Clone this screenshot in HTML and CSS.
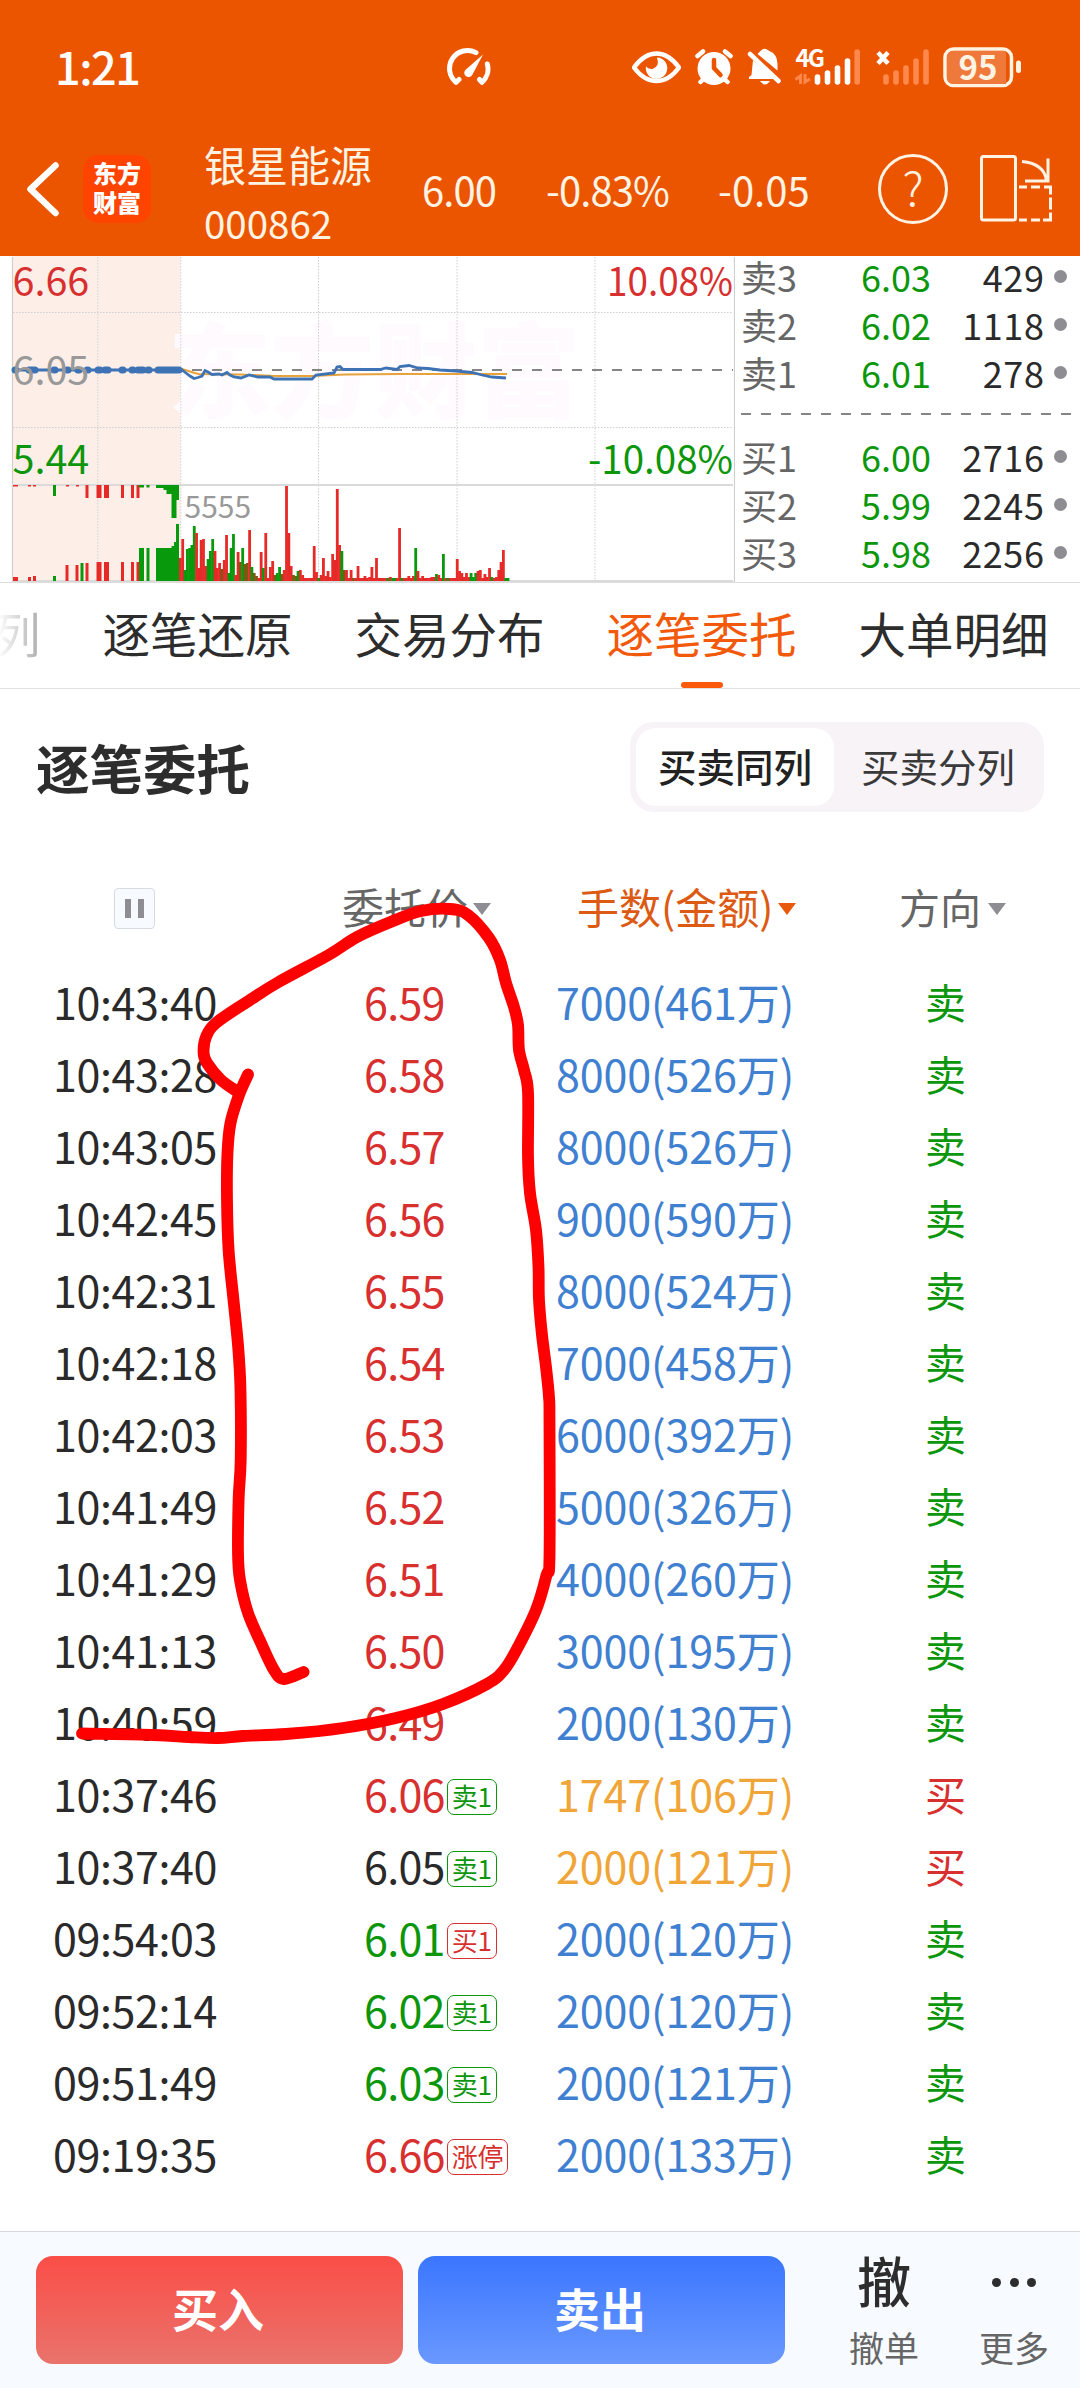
FILE: index.html
```html
<!DOCTYPE html>
<html lang="zh-CN">
<head>
<meta charset="utf-8">
<title>银星能源 000862</title>
<link rel="stylesheet" href="styles.css">
</head>
<body>
<header class="header">
  <div class="status">
    <span class="clock">1:21</span>
    <svg class="gauge" width="46" height="40" viewBox="446 47 46 40" fill="none" stroke="#fff" stroke-width="5" stroke-linecap="round" stroke-linejoin="round">
      <path d="M476 52.6A18 18 0 0 0 456 82.3L459 79.5M487.300 64A18 18 0 0 1 482 82.300L479.500 79.500" />
      <path d="M483 54.500L472.500 74.500A4.300 4.300 0 1 1 466.200 69.200Z" fill="#fff" stroke="none"/>
    </svg>
    <div class="status-icons">
      <svg width="49" height="40" viewBox="632 47 49 40"><path d="M634 67.500C641 58 648 53.500 656.500 53.500S672 58 679 67.500C672 77 665 81 656.500 81S641 77 634 67.500Z" fill="none" stroke="#fff" stroke-width="4.500"/><path d="M657 57.500A10.700 10.700 0 1 1 646 66.500Q649 69.500 652.500 69Q660 66.500 657 57.500Z" fill="#fff"/></svg>
      <svg width="38" height="40" viewBox="695.500 47 38 40" stroke-linecap="round"><circle cx="714.500" cy="68.500" r="16.500" fill="#fff"/><path d="M698 56L703.500 51.500M731 56L725.500 51.500M701 82L705 78M728 82L724 78" stroke="#fff" stroke-width="4.500"/><path d="M714.500 60V68L721 75" fill="none" stroke="#ec5500" stroke-width="4.500"/></svg>
      <svg width="34" height="40" viewBox="747.500 47 34 40"><path d="M753.500 60L775 79H749.500V77L752 75ZM758 54Q761 51 762 50Q765.500 47.500 769 50.500Q778 54 778 64V70.500ZM760.500 81H770.500Q765.500 88 760.500 81Z" fill="#fff"/><path d="M750.500 54L779 81" stroke="#fff" stroke-width="4.500" stroke-linecap="round"/></svg>
      <svg class="loose" width="66" height="40" viewBox="795.500 47 66 40" stroke-width="5.600" stroke-linecap="round"><text class="net" x="796" y="66.500">4G</text><path d="M801 84V76L796 79.500M805.500 74V82L810.500 79" fill="none" stroke="#ff884c" stroke-width="3" stroke-linecap="butt"/><path d="M818 77V82M828 73V82M838 68V82M848 61V82" stroke="#fff"/><path d="M857.700 52V82" stroke="#ff884c"/></svg>
      <svg width="54" height="40" viewBox="875 47 54 40" stroke-width="5.600" stroke-linecap="round"><path d="M878 52.500L888 63.500M888 52.500L878 63.500" stroke="#fff" stroke-width="4.500" stroke-linecap="butt"/><path d="M886 77V82M896 73V82M906 68V82M916 61V82M926 52V82" stroke="#ff884c"/></svg>
      <svg class="loose" width="79" height="40" viewBox="943 47 79 40"><rect x="945" y="49" width="66.500" height="36.500" rx="8.500" fill="#ec5500" stroke="#fff3e3" stroke-width="3.500"/><path d="M953 51H1006V84H953Q947 84 947 77V58Q947 51 953 51Z" fill="#ef783b"/><rect x="1016" y="60.500" width="5" height="12.500" rx="2.500" fill="#fff3e3"/><text class="batt" x="978" y="79.500" text-anchor="middle">95</text></svg>
    </div>
  </div>
  <nav class="nav">
    <svg width="83" height="70" viewBox="0 153.500 83 70" fill="none" stroke="#fff" stroke-width="6.500" stroke-linecap="round" stroke-linejoin="round"><path d="M55.500 165L30.500 188.700L55.500 212.500"/></svg>
    <div class="logo">东方<br>财富</div>
    <div class="stock"><span class="stock-name">银星能源</span><span class="stock-code">000862</span></div>
    <span class="quote tight">6.00</span>
    <span class="quote tight">-0.83%</span>
    <span class="quote">-0.05</span>
    <div class="help">?</div>
    <svg width="76" height="70" viewBox="981 153.500 76 70" fill="none" stroke="#fff3e3" stroke-width="3"><rect x="983.500" y="156" width="34" height="63.500" rx="2"/><path d="M1024 161Q1046 163 1048.500 180M1050 158V180.500H1027"/><path d="M1021 186.500H1029M1033 186.500H1042M1046 186.500H1052.500V194M1052.500 197V209M1052.500 212V219.500H1045M1042 219.500H1033M1029 219.500H1021"/></svg>
  </nav>
</header>

<section class="market">
  <svg class="chart" width="735" height="326" viewBox="0 256 735 326">
    <rect x="13" y="256" width="167.500" height="325" fill="#feeee8"/>
    <text class="watermark" x="168" y="410">东方财富</text>
    <g stroke="#cfcfd3" stroke-width="1" stroke-dasharray="1.500 1.500"><path d="M97.800 257V581M180.800 257V581M318.500 257V581M457 257V581M595 257V581M13 312.500H733M13 427.500H733"/></g>
    <path d="M12.500 257V582M734.500 257V582" stroke="#cfcfcf" stroke-width="1.200"/>
    <path d="M12 485H733M12 581H733" stroke="#dadada" stroke-width="2"/>
    <path d="M192 370H733" stroke="#858585" stroke-width="2" stroke-dasharray="10 10"/>
    <g id="bars"></g>
    <path d="M182 369C190 371 194 373.500 199 374L240 374.500L275 376L312 376L345 374.500L400 374L507 374" fill="none" stroke="#e8a23a" stroke-width="2"/>
    <g stroke="#3d73b4" fill="none"><path stroke-width="2.800" d="M13 370H182L186 373L190 376L194 378.500L198 377.500L202 376L205 370.500L208 372L212 374.500L219 374L222 375L227 372.500L230 375L234 377L241 378L249 375L258 377L270 377L274 379L312 379L316 375L334 373L337 367L340 366.500L343 369.500L380 369.500L386 368L397 369.500L400 366.500L409 365.500L418 368L428 368.500L440 370L456 371L472 372.500L482 375L492 377L506 378"/><path stroke-width="7" stroke-linecap="round" d="M15 370h1M29 370h6M54 370h1M67 370h1M78 370h1M87 370h1M98 370h2M105 370h3M122 370h1M132 370h1M138 370h5M148 370h1M158 370h21"/></g>
    <text class="label up" x="12.500" y="296">6.66</text>
    <text class="label mid" x="12.500" y="385">6.05</text>
    <text class="label down" x="12.500" y="474">5.44</text>
    <text class="label up" x="607" y="295.500" textLength="126" lengthAdjust="spacingAndGlyphs">10.08%</text>
    <text class="label down" x="588" y="474" textLength="145" lengthAdjust="spacingAndGlyphs">-10.08%</text>
    <text class="volume" x="184.500" y="517.500">5555</text>
  </svg>
  <div class="book">
    <div class="level"><span>卖3</span><b>6.03</b><em>429</em><i></i></div>
    <div class="level"><span>卖2</span><b>6.02</b><em>1118</em><i></i></div>
    <div class="level"><span>卖1</span><b>6.01</b><em>278</em><i></i></div>
    <div class="split"></div>
    <div class="level"><span>买1</span><b>6.00</b><em>2716</em><i></i></div>
    <div class="level"><span>买2</span><b>5.99</b><em>2245</em><i></i></div>
    <div class="level"><span>买3</span><b>5.98</b><em>2256</em><i></i></div>
  </div>
</section>

<nav class="tabs">
  <span class="tab faded">列</span>
  <span class="tab">逐笔还原</span>
  <span class="tab">交易分布</span>
  <span class="tab active">逐笔委托</span>
  <span class="tab">大单明细</span>
</nav>

<main class="orders">
  <div class="title-row">
    <h1>逐笔委托</h1>
    <div class="segmented"><span class="seg on">买卖同列</span><span class="seg">买卖分列</span></div>
  </div>
  <div class="row head">
    <span class="pause"><i></i><i></i></span>
    <span class="sort">委托价</span>
    <span class="sort hot">手数(金额)</span>
    <span class="sort">方向</span>
  </div>
  <div class="row"><span>10:43:40</span><span class="up">6.59</span><span class="big">7000(461万)</span><span class="down">卖</span></div>
  <div class="row"><span>10:43:28</span><span class="up">6.58</span><span class="big">8000(526万)</span><span class="down">卖</span></div>
  <div class="row"><span>10:43:05</span><span class="up">6.57</span><span class="big">8000(526万)</span><span class="down">卖</span></div>
  <div class="row"><span>10:42:45</span><span class="up">6.56</span><span class="big">9000(590万)</span><span class="down">卖</span></div>
  <div class="row"><span>10:42:31</span><span class="up">6.55</span><span class="big">8000(524万)</span><span class="down">卖</span></div>
  <div class="row"><span>10:42:18</span><span class="up">6.54</span><span class="big">7000(458万)</span><span class="down">卖</span></div>
  <div class="row"><span>10:42:03</span><span class="up">6.53</span><span class="big">6000(392万)</span><span class="down">卖</span></div>
  <div class="row"><span>10:41:49</span><span class="up">6.52</span><span class="big">5000(326万)</span><span class="down">卖</span></div>
  <div class="row"><span>10:41:29</span><span class="up">6.51</span><span class="big">4000(260万)</span><span class="down">卖</span></div>
  <div class="row"><span>10:41:13</span><span class="up">6.50</span><span class="big">3000(195万)</span><span class="down">卖</span></div>
  <div class="row"><span>10:40:59</span><span class="up">6.49</span><span class="big">2000(130万)</span><span class="down">卖</span></div>
  <div class="row"><span>10:37:46</span><span class="up">6.06<small class="down">卖1</small></span><span class="gold">1747(106万)</span><span class="up">买</span></div>
  <div class="row"><span>10:37:40</span><span>6.05<small class="down">卖1</small></span><span class="gold">2000(121万)</span><span class="up">买</span></div>
  <div class="row"><span>09:54:03</span><span class="down">6.01<small class="up">买1</small></span><span class="big">2000(120万)</span><span class="down">卖</span></div>
  <div class="row"><span>09:52:14</span><span class="down">6.02<small class="down">卖1</small></span><span class="big">2000(120万)</span><span class="down">卖</span></div>
  <div class="row"><span>09:51:49</span><span class="down">6.03<small class="down">卖1</small></span><span class="big">2000(121万)</span><span class="down">卖</span></div>
  <div class="row"><span>09:19:35</span><span class="up">6.66<small class="up">涨停</small></span><span class="big">2000(133万)</span><span class="down">卖</span></div>
</main>

<footer class="actions">
  <button class="buy">买入</button>
  <button class="sell">卖出</button>
  <div class="action cancel"><strong>撤</strong><span>撤单</span></div>
  <div class="action"><svg width="44" height="52" viewBox="0 0 44 52" fill="#2d2d2d"><circle cx="4.500" cy="26.500" r="4.500"/><circle cx="22.500" cy="26.500" r="4.500"/><circle cx="39.500" cy="26.500" r="4.500"/></svg><span>更多</span></div>
</footer>

<svg class="ink" width="1080" height="2388" viewBox="0 0 1080 2388" fill="none" stroke="#fe0000" stroke-width="11.800" stroke-linecap="round" stroke-linejoin="round">
  <path id="loop-left"/>
  <path id="loop-right"/>
</svg>
<script src="chart.js"></script>
</body>
</html>
```
FILE: styles.css
```css
* { box-sizing: border-box; }
body {
  margin: 0;
  width: 1080px;
  height: 2388px;
  display: flex;
  flex-direction: column;
  position: relative;
  overflow: hidden;
  background: #fff;
  color: #2a2a2a;
  font-family: "Noto Sans CJK SC", sans-serif;
}
svg { display: block; }
.loose { overflow: visible; }
.up { color: #d8302f; fill: #d8302f; }
.down { color: #0c960c; fill: #0c960c; }
.mid { fill: #999; }

.header { height: 256px; flex: none; background: #ec5500; color: #fff3e3; }
.status { height: 134px; display: grid; grid-template-columns: 391px 186px 1fr; padding-left: 55px; align-items: center; }
.clock { font-size: 45px; line-height: 60px; font-weight: 500; color: #fff; letter-spacing: -1.500px; margin-top: -3px; }
.status-icons { display: flex; gap: 14px; align-items: center; }
.net { font-size: 24px; font-weight: 700; fill: #fff; letter-spacing: -2px; }
.batt { font-size: 33px; font-weight: 700; fill: #fff3e3; }
.nav { height: 109px; display: grid; grid-template-rows: 109px; grid-template-columns: 83px 121px 218px 124px 172px 160px 101px 1fr; align-items: center; }
.logo { width: 68px; height: 68px; border-radius: 15px; background: #ff4400; color: #fff; font-size: 24px; line-height: 29px; font-weight: 900; text-align: center; padding-top: 3px; }
.stock { display: flex; flex-direction: column; margin-top: 9px; }
.stock-name { font-size: 42px; line-height: 58px; }
.stock-code { font-size: 38.500px; line-height: 58px; }
.quote { font-size: 40px; line-height: 60px; white-space: nowrap; }
.quote.tight { letter-spacing: -.9px; }
.help { width: 70px; height: 70px; border: 3px solid #fff3e3; border-radius: 50%; font-size: 47px; line-height: 58px; font-weight: 300; text-align: center; }

.market { height: 327px; flex: none; display: flex; border-bottom: 1px solid #ddd; }
.chart { flex: none; }
.label { font-size: 39.500px; }
.volume { font-size: 30px; fill: #999; }
.watermark { font-size: 103px; font-weight: 900; fill: #fefafe; }
.book { flex: 1; padding: 0 8px 0 6px; font-size: 36px; }
.level { height: 48px; display: grid; grid-template-columns: 120px 90px 93.500px 1fr; align-items: center; line-height: 48px; position: relative; top: -4px; }
.level span { color: #666; }
.level b { color: #0c960c; font-weight: 400; }
.level em { font-style: normal; text-align: right; letter-spacing: .6px; }
.level i { width: 13px; height: 13px; border-radius: 50%; background: #8d8d93; justify-self: end; margin: 0 5px 0 0; }
.split { height: 36px; background: repeating-linear-gradient(90deg, #858585 0 10px, transparent 10px 20px) 0 13px / 100% 2px no-repeat; }

.tabs { height: 106px; flex: none; display: flex; gap: 62px; padding-bottom: 6px; border-bottom: 1px solid #e0e0e0; font-size: 47.500px; line-height: 100px; white-space: nowrap; overflow: hidden; }
.tab { flex: none; color: #2d2d2d; position: relative; }
.tab.faded { margin-left: -7px; background: linear-gradient(90deg, #fff 10%, #aaa); -webkit-background-clip: text; background-clip: text; color: transparent; }
.tab.active { color: #f3590a; }
.tab.active::after { content: ""; position: absolute; left: 74px; bottom: -6px; width: 42px; height: 6px; border-radius: 3px; background: #fb5a0a; }

.orders { flex: 1; }
.title-row { height: 184px; display: flex; justify-content: space-between; align-items: flex-start; padding: 33px 36px 0; }
h1 { margin: 10px 0 0; font-size: 53.500px; line-height: 70px; font-weight: 700; color: #2d2d2d; }
.segmented { display: flex; height: 90px; padding: 6px; border-radius: 24px; background: #f7f3f7; }
.seg { font-size: 38.500px; line-height: 75px; text-align: center; color: #3a3a3a; border-radius: 20px; }
.seg.on { background: #fff; font-weight: 500; color: #222; width: 198px; }
.segmented .seg:last-child { width: 204px; padding-left: 4px; }
.row { height: 72px; display: grid; grid-template-columns: 311px 192px 369px 1fr; padding-left: 53px; line-height: 72px; font-size: 43px; white-space: nowrap; }
.row > span:first-child { letter-spacing: -.4px; }
.row > span:nth-child(2) { letter-spacing: -.7px; }
.row > span:nth-child(3) { letter-spacing: -.1px; }
.row > span:last-child { font-size: 41px; }
.row.head { height: 91.500px; grid-template-columns: 289px 235px 322px 1fr; color: #666; }
.row.head .sort { font-size: 42px; line-height: 66px; letter-spacing: 0; }
.sort::after { content: ""; display: inline-block; margin-left: 5px; vertical-align: 9px; border: 9px solid transparent; border-top: 12px solid #8d8d93; border-bottom: 0; }
.row.head .sort:last-child { font-size: 41px; }
.sort:last-child::after { margin-left: 7px; }
.sort.hot { color: #dc5a12; }
.sort.hot::after { border-top-color: #e85a0c; }
.pause { width: 41px; height: 41px; margin: 15px 0 0 61px; border: 1.500px solid #d6dae2; border-radius: 4px; background: #f7faff; display: flex; justify-content: center; align-items: center; gap: 7px; }
.pause i { width: 6px; height: 19px; background: #8d8d93; }
.big { color: #3f80d0; }
.gold { color: #f0a538; }
.row small { display: inline-block; height: 36px; margin-left: 2px; padding: 0 4px; border: 1.500px solid currentColor; border-radius: 7px; font-size: 26px; line-height: 32px; letter-spacing: -.3px; vertical-align: 5px; }

.actions { height: 157px; flex: none; display: flex; padding: 24px 0 0 36px; border-top: 1px solid #d5d8dd; background: #f7faff; }
button { width: 367px; height: 108px; margin: 0 15px 0 0; padding: 0 3px 6px 0; border: 0; border-radius: 17px; color: #fff; font: 700 46px "Noto Sans CJK SC", sans-serif; }
.buy { background: linear-gradient(#fa4e47, #e9736c); }
.sell { background: linear-gradient(#3a76ff, #6a98ff); }
.action { width: 130px; display: flex; flex-direction: column; align-items: center; font-size: 35px; color: #666; }
.action strong { font-size: 54px; font-weight: 500; line-height: 52px; height: 52px; color: #2d2d2d; margin-top: -2px; margin-bottom: 2px; }
.action span { line-height: 50px; margin-top: 14px; }
.cancel { margin-left: 19px; }
.ink { position: absolute; left: 0; top: 0; pointer-events: none; }
```
FILE: chart.js
```javascript
const NS = 'http://www.w3.org/2000/svg';
const RED = '#e62a28', GREEN = '#08990c', MIX = '#7a5a10';
const bars = document.getElementById('bars');

function bar(x, y, w, h, color) {
  const r = document.createElementNS(NS, 'rect');
  r.setAttribute('x', x); r.setAttribute('y', y);
  r.setAttribute('width', w); r.setAttribute('height', h);
  r.setAttribute('fill', color);
  bars.appendChild(r);
}

// opening auction: [x, width, height]
const auctionTop = {
  [RED]: [[13,5,1.5],[28,3,1.5],[33,3,1.5],[66,3,1.5],[76,3,1.5],[85.5,3,13],[96.500,5,13],[104,5,13],[121,3,13],[131,3,13],[136.500,3,13]],
  [GREEN]: [[53,3,11],[139,5,2.5],[146.500,3,2.5],[156,23,3],[163.500,15.500,5],[166.500,12.500,9],[171.500,5,33],[176,3,15]]
};
const auctionBottom = {
  [RED]: [[13,5,4],[28,3,4],[33,3,5],[65.500,3,16],[75.500,3,16],[85.500,3,18],[96.500,5,19],[104,5,19],[121,3,19],[131,3,19],[136.500,3,19]],
  [GREEN]: [[53,3,5],[80.500,3,18],[139,5,33],[146.500,3,33],[156,23,33],[171.500,7.500,35],[174,5,39],[176,3,57]]
};
for (const c in auctionTop) auctionTop[c].forEach(([x, w, h]) => bar(x, 485, w, h, c));
for (const c in auctionBottom) auctionBottom[c].forEach(([x, w, h]) => bar(x, 581 - h, w, h, c));

// minute volumes after the open
const volumes = 'r23 r42 g11 g32 g33 g36 g55 r48 r13 r41 r42 r15 g22 g30 g42 r30 r13 r18 m12 r21 r46 g8 g33 g47 r6 r29 m19 g33 m17 m18 r51 g14 m8 m5 r3 r29 g13 r48 r3 r14 r20 m6 g8 g14 m7 r11 r95 r48 r15 m6 m5 g10 r11 r6 r3 r3 r3 r3 r35 r9 g3 r6 r23 r5 r10 r4 r27 r21 r92 r36 g30 m11 r11 r3 r11 m3 r3 r15 r3 r3 r5 r3 r4 r14 r3 r23 r3 r3 r3 r3 g3 r4 g3 g3 r3 r53 g3 r3 r3 r5 r3 r5 g33 r10 r3 r5 r3 r3 r3 r4 r4 g7 r6 r3 g27 r3 g3 r3 r3 r3 r22 r10 r8 r4 r8 r4 g8 g4 g8 r10 r11 r3 r7 r4 r13 g4 r3 r4 r11 r19 r31 g3 g3';
volumes.split(' ').forEach((v, i) => {
  const h = Number(v.slice(1));
  bar((179 + i * 2.307).toFixed(2), 581 - h, 2.8, h, { r: RED, g: GREEN, m: MIX }[v[0]]);
});

// hand-drawn marker strokes, smoothed through their sample points
function smooth(points) {
  let d = `M${points[0]}`;
  for (let i = 0; i < points.length - 1; i++) {
    const p0 = points[Math.max(i - 1, 0)], p1 = points[i], p2 = points[i + 1], p3 = points[Math.min(i + 2, points.length - 1)];
    const c = (a, b, m, s) => (m + s * (b - a) / 6).toFixed(1);
    d += `C${c(p0[0], p2[0], p1[0], 1)},${c(p0[1], p2[1], p1[1], 1)} ${c(p1[0], p3[0], p2[0], -1)},${c(p1[1], p3[1], p2[1], -1)} ${p2}`;
  }
  return d;
}
document.getElementById('loop-left').setAttribute('d', smooth([[248,1074.5],[239,1095],[230.5,1123],[227.5,1153],[227,1200],[228.6,1250],[233.5,1300],[238,1345],[240.5,1390],[240.7,1460],[238.600,1500],[238,1553],[240,1580],[248,1613],[261,1643],[274,1670],[284,1679],[303.600,1672]]));
document.getElementById('loop-right').setAttribute('d', smooth([[238,1092],[221,1080],[207,1063],[203.600,1053],[206,1037],[216,1023],[250,1000],[278.600,982],[328.600,955],[357,937],[393,921],[421,911],[450,909],[468,915],[489,938],[500,960],[506,983],[514,1007],[518,1025],[519,1050],[524,1070],[528,1092],[528,1157],[530,1193],[536,1230],[538.500,1267],[539,1300],[542,1335],[546,1367],[549,1397],[549.500,1423],[549.500,1557],[546.500,1575],[536,1610],[518,1647],[504,1670],[487,1684],[443,1704],[396,1718],[343,1728],[286,1734],[243,1736],[218,1738],[189,1737],[153.600,1735],[82,1733.500]]));
```
